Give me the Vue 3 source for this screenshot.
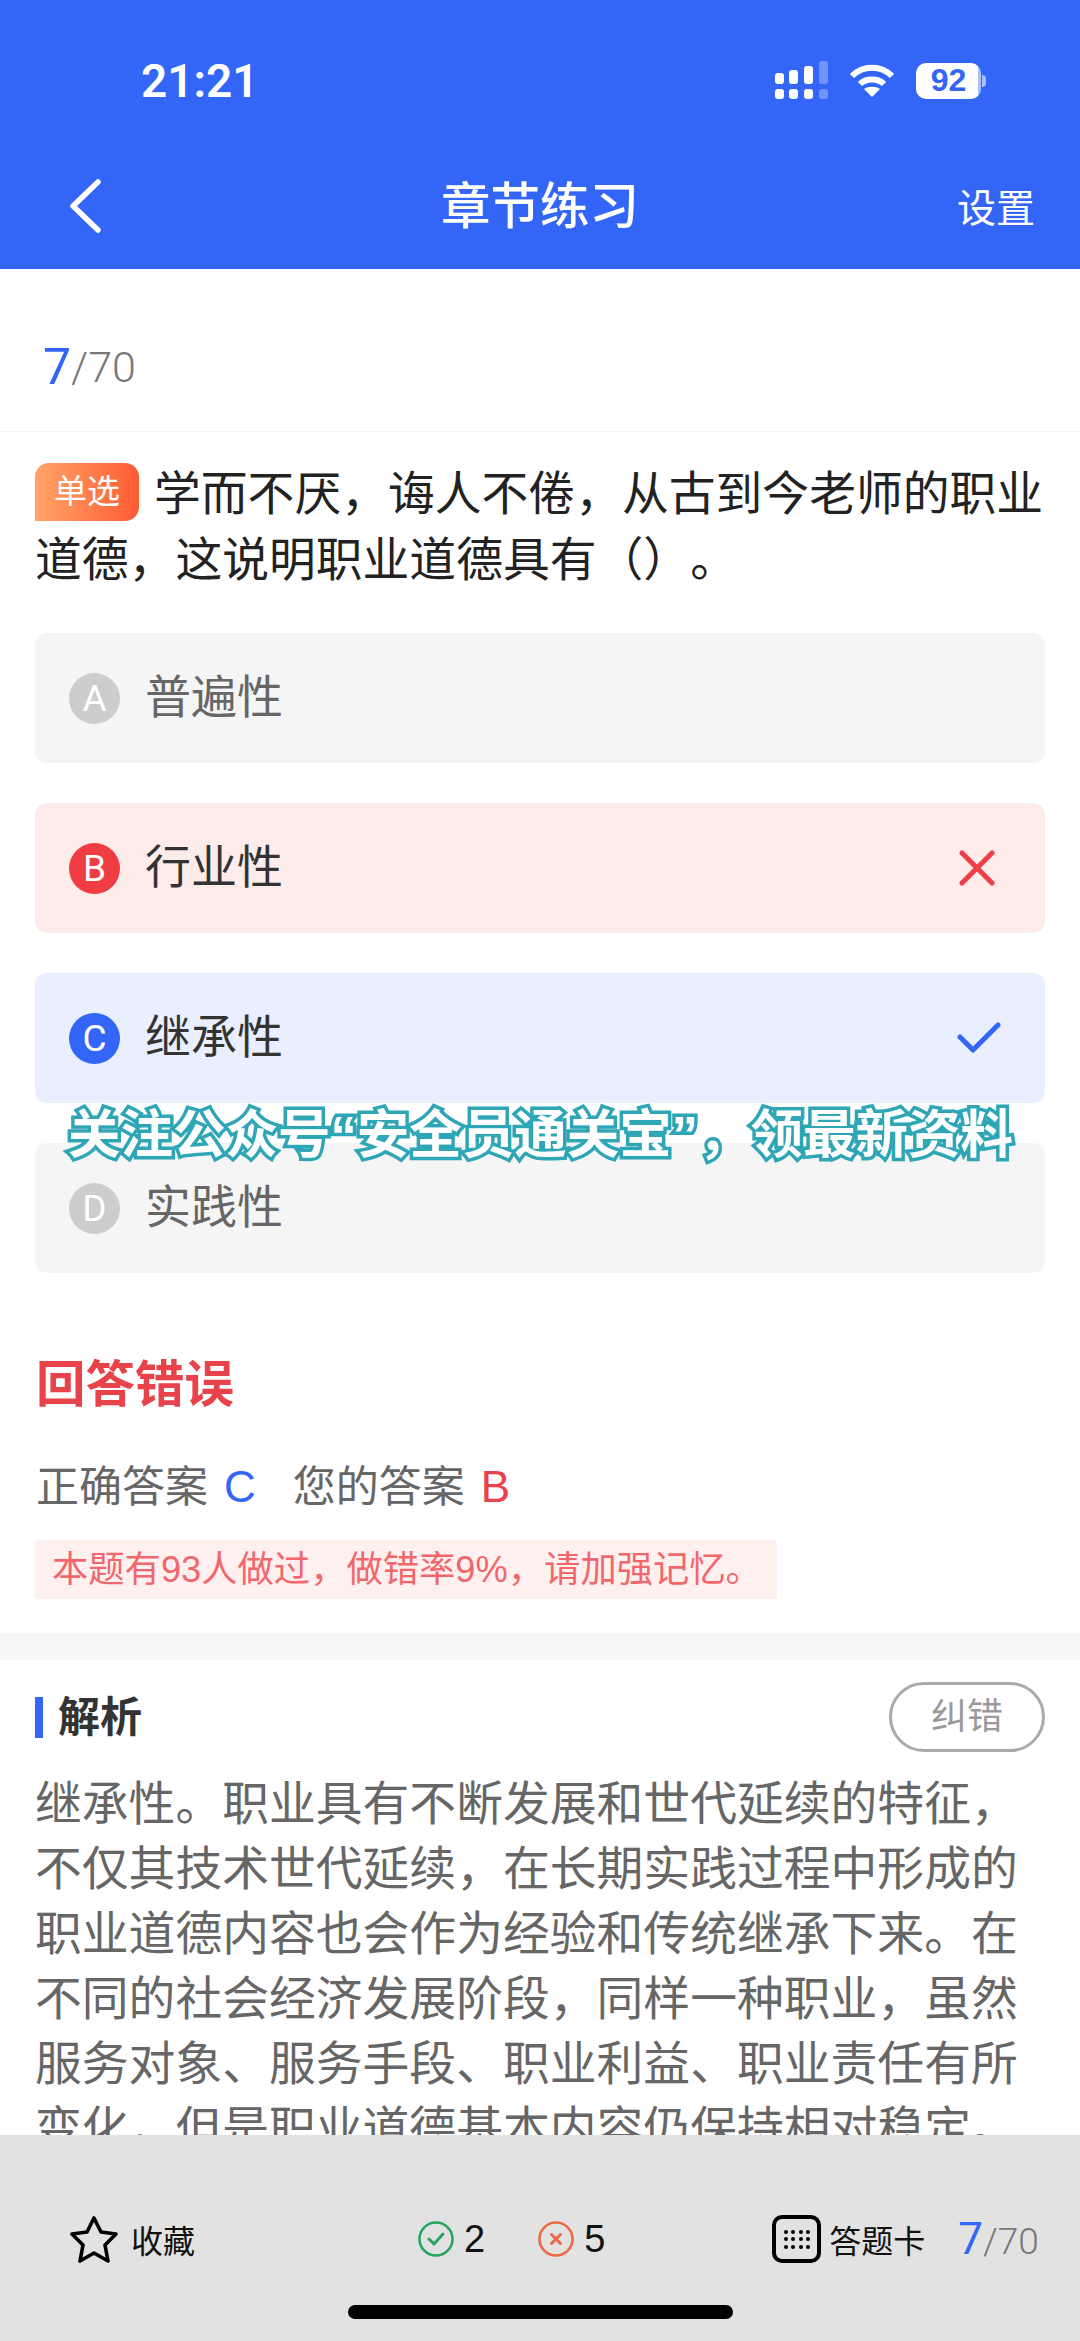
<script setup>
const options = [
  { key: 'A', text: '普遍性', state: 'idle' },
  { key: 'B', text: '行业性', state: 'wrong' },
  { key: 'C', text: '继承性', state: 'right' },
  { key: 'D', text: '实践性', state: 'idle' }
]
const rows = [0, 1, 2]
const cols = [0, 1, 2, 3]
</script>

<template>
  <div class="page">
    <header class="head">
      <div class="status">
        <span class="time">21:21</span>
        <div class="status-icons">
          <svg class="signal" width="54" height="40" viewBox="0 0 54 40" fill="#fff">
            <rect x="0" y="12" width="9" height="11" rx="3" />
            <rect x="14" y="9" width="9" height="14" rx="3" />
            <rect x="29" y="5" width="9" height="18" rx="3" />
            <rect x="44" y="0" width="9" height="23" rx="3" opacity=".3" />
            <rect x="0" y="28" width="9" height="10" rx="3" />
            <rect x="14" y="28" width="9" height="10" rx="3" />
            <rect x="29" y="28" width="9" height="10" rx="3" />
            <rect x="44" y="28" width="9" height="10" rx="3" opacity=".3" />
          </svg>
          <svg class="wifi" width="46" height="34" viewBox="0 0 46 34" fill="none" stroke="#fff" stroke-width="6">
            <path d="M3 12 C14 1 32 1 43 12" />
            <path d="M11 20 C17 14 29 14 35 20" />
            <path d="M23 33 L15 25 C19 22 27 22 31 25 Z" fill="#fff" stroke="none" />
          </svg>
          <div class="battery"><span>92</span></div>
          <span class="nub"></span>
        </div>
      </div>
      <nav class="nav">
        <svg class="back" width="32" height="54" viewBox="0 0 32 54" fill="none" stroke="#fff" stroke-width="5.5" stroke-linecap="round" stroke-linejoin="round">
          <path d="M29 3 L4 27 L29 51" />
        </svg>
        <h1 class="title">章节练习</h1>
        <span class="setting">设置</span>
      </nav>
    </header>

    <main class="content">
      <div class="counter"><em>7</em><span>/70</span></div>

      <section class="question">
        <div class="q-line"><span class="tag">单选</span><span>学而不厌，诲人不倦，从古到今老师的职业</span></div>
        <div class="q-line">道德，这说明职业道德具有（）。</div>
      </section>

      <section class="options">
        <div v-for="o in options" :key="o.key" class="option" :class="o.state">
          <span class="badge">{{ o.key }}</span>
          <span class="opt-text">{{ o.text }}</span>
          <svg v-if="o.state === 'wrong'" class="mark" width="36" height="36" viewBox="0 0 36 36" fill="none" stroke="#ee3f44" stroke-width="5" stroke-linecap="round">
            <path d="M3 3 L33 33 M33 3 L3 33" />
          </svg>
          <svg v-if="o.state === 'right'" class="mark check" width="44" height="32" viewBox="0 0 44 32" fill="none" stroke="#3366f6" stroke-width="5" stroke-linecap="round" stroke-linejoin="round">
            <path d="M3 15 L16 28 L41 3" />
          </svg>
        </div>
      </section>

      <section class="result">
        <h2 class="verdict">回答错误</h2>
        <p class="answers">
          <span>正确答案</span><b class="blue">C</b>
          <span class="second">您的答案</span><b class="red">B</b>
        </p>
        <p class="stat">本题有93人做过，做错率9%，请加强记忆。</p>
      </section>

      <div class="band"></div>

      <section class="analysis">
        <div class="an-head">
          <h3 class="an-title">解析</h3>
          <span class="report">纠错</span>
        </div>
        <p class="an-body">继承性。职业具有不断发展和世代延续的特征，不仅其技术世代延续，在长期实践过程中形成的职业道德内容也会作为经验和传统继承下来。在不同的社会经济发展阶段，同样一种职业，虽然服务对象、服务手段、职业利益、职业责任有所变化，但是职业道德基本内容仍保持相对稳定。</p>
      </section>
    </main>

    <footer class="foot">
      <div class="tools">
        <div class="tool fav">
          <svg width="48" height="48" viewBox="0 0 48 48" fill="none" stroke="#000" stroke-width="3.6" stroke-linejoin="round">
            <path d="M24 3 L31 17 L46 19 L35 30 L38 46 L24 38 L10 46 L13 30 L2 19 L17 17 Z" />
          </svg>
          <span>收藏</span>
        </div>
        <div class="tool score">
          <svg width="36" height="36" viewBox="0 0 36 36" fill="none" stroke="#2aa55f" stroke-width="2.6">
            <circle cx="18" cy="18" r="16.5" />
            <path d="M11 18 L16 23 L25 13" stroke-width="3" stroke-linecap="round" stroke-linejoin="round" />
          </svg>
          <span class="num">2</span>
          <svg class="second-icon" width="36" height="36" viewBox="0 0 36 36" fill="none" stroke="#ee6a47" stroke-width="2.6">
            <circle cx="18" cy="18" r="16.5" />
            <path d="M13.5 13.5 L22.5 22.5 M22.5 13.5 L13.5 22.5" stroke-width="3" stroke-linecap="round" />
          </svg>
          <span class="num">5</span>
        </div>
        <div class="tool card">
          <div class="grid-icon">
            <div v-for="r in rows" :key="r" class="grid-row"><i v-for="c in cols" :key="c"></i></div>
          </div>
          <span>答题卡</span>
          <div class="mini-count"><em>7</em><span>/70</span></div>
        </div>
      </div>
      <div class="home"></div>
    </footer>

    <div class="watermark">关注公众号“安全员通关宝”，领最新资料</div>
  </div>
</template>

<style>
html, body { margin: 0; padding: 0; background: #fff; }
</style>

<style scoped>
* { box-sizing: border-box; }
.page {
  position: relative;
  width: 1080px;
  height: 2341px;
  display: flex;
  flex-direction: column;
  overflow: hidden;
  background: #fff;
  font-family: "Liberation Sans", "Noto Sans CJK SC", sans-serif;
  text-spacing-trim: space-all;
}
h1, h2, h3, p { margin: 0; font-weight: normal; }
em { font-style: normal; }

.head { flex: none; height: 269px; background: #3366f6; color: #fff; }
.status {
  height: 161px;
  padding: 0 0 0 141px;
  display: flex;
  align-items: center;
  justify-content: space-between;
}
.time { font-family: Roboto, sans-serif; font-size: 46px; font-weight: 600; line-height: 54px; }
.status-icons { display: flex; align-items: center; padding-right: 94px; }
.wifi { margin-left: 20px; }
.battery {
  width: 65px;
  height: 36px;
  margin-left: 21px;
  border-radius: 10px;
  background: linear-gradient(90deg, #fff 96%, #a9bffb 96%);
  display: flex;
  align-items: center;
  justify-content: center;
  color: #3366f6;
  font-size: 32px;
  font-weight: 700;
}
.nub {
  width: 4px;
  height: 12px;
  margin-left: 1px;
  border-radius: 0 4px 4px 0;
  background: #a9bffb;
}
.nav {
  height: 108px;
  position: relative;
  display: flex;
  align-items: center;
  justify-content: space-between;
  padding: 0 45px 18px 69px;
}
.title {
  position: absolute;
  left: 441px;
  top: 11px;
  font-size: 49.5px;
  font-weight: 500;
  line-height: 70px;
}
.setting { font-size: 39px; line-height: 50px; padding-top: 6px; }

.content { flex: 1; min-height: 0; overflow: hidden; }
.counter {
  height: 163px;
  padding: 0 0 39px 43px;
  display: flex;
  align-items: flex-end;
  border-bottom: 1px solid #f3f3f3;
  color: #777;
  font-family: Roboto, sans-serif;
  line-height: 50px;
}
.counter em { font-size: 50px; color: #3366f6; }
.counter span { font-size: 43px; font-weight: 300; }

.question { padding: 29px 35px 0; }
.q-line { font-size: 46.8px; line-height: 66px; color: #222; white-space: nowrap; }
.tag {
  display: inline-block;
  width: 104px;
  height: 58px;
  margin-right: 15px;
  border-radius: 14px 14px 14px 0;
  background: linear-gradient(90deg, #ffa468, #ff5c33);
  color: #fff;
  font-size: 33px;
  line-height: 58px;
  text-align: center;
  vertical-align: top;
  margin-top: 2px;
}

.options { margin-top: 40px; padding: 0 35px; display: flex; flex-direction: column; gap: 40px; }
.option {
  height: 130px;
  padding: 0 50px 0 34px;
  display: flex;
  align-items: center;
  border-radius: 12px;
  background: #f5f5f5;
  color: #666;
  font-size: 46px;
}
.badge {
  width: 51px;
  height: 51px;
  margin-right: 25px;
  border-radius: 50%;
  background: #cdcdcd;
  color: #fff;
  font-family: Roboto, sans-serif;
  font-size: 37px;
  text-align: center;
  line-height: 51px;
}
.opt-text { flex: 1; line-height: 60px; padding-bottom: 2px; }
.check { margin-right: -6px; }
.wrong { background: #feeceb; color: #333; }
.wrong .badge { background: #ef3d41; }
.right { background: #e9effe; color: #333; }
.right .badge { background: #3366f6; }

.result { padding: 0 35px; }
.verdict { margin-top: 82px; font-size: 49.5px; line-height: 60px; font-weight: 700; color: #e8434a; padding-left: 1px; }
.answers { margin-top: 42px; font-size: 43px; line-height: 60px; color: #666; padding-left: 1px; }
.answers b { font-weight: normal; margin-left: 16px; font-size: 44px; }
.blue { color: #3366f6; }
.red { color: #e8434a; }
.second { margin-left: 37px; }
.stat {
  width: 742px;
  height: 59px;
  margin-top: 23px;
  padding-left: 17px;
  background: #fff0f0;
  border-radius: 3px;
  color: #f0686c;
  font-size: 36.3px;
  line-height: 59px;
  white-space: nowrap;
}
.band { height: 27px; margin-top: 34px; background: #f5f7f9; }

.analysis { padding: 22px 35px 0; }
.an-head { height: 70px; display: flex; align-items: center; justify-content: space-between; }
.an-title {
  border-left: 8px solid #3366f6;
  padding-left: 15px;
  height: 41px;
  font-size: 42px;
  line-height: 41px;
  font-weight: 700;
  color: #333;
}
.report {
  width: 156px;
  height: 70px;
  border: 3px solid #aaa;
  border-radius: 35px;
  color: #999;
  font-size: 36px;
  line-height: 64px;
  text-align: center;
}
.an-body { margin-top: 20px; font-size: 46.8px; line-height: 65px; color: #666; }

.foot { flex: none; height: 206px; background: #e2e2e2; }
.tools { padding: 80px 0 0 70px; height: 170px; display: flex; align-items: flex-start; }
.tool { display: flex; align-items: center; height: 48px; color: #111; font-size: 32px; }
.fav svg { margin-right: 13px; }
.score { margin-left: 223px; }
.num { margin-left: 10px; font-size: 38px; color: #111; }
.second-icon { margin-left: 53px; }
.card { margin-left: 167px; }
.grid-icon {
  width: 49px;
  height: 48px;
  margin-right: 8px;
  border: 4px solid #000;
  border-radius: 10px;
  display: flex;
  flex-direction: column;
  align-items: center;
  justify-content: center;
  gap: 3.5px;
}
.grid-row { display: flex; gap: 3.5px; }
.grid-row i { width: 4px; height: 4px; border-radius: 50%; background: #000; }
.mini-count {
  margin-left: 33px;
  display: flex;
  align-items: baseline;
  color: #777;
  font-family: Roboto, sans-serif;
}
.mini-count em { font-size: 44px; color: #3366f6; }
.mini-count span { font-size: 37px; font-weight: 300; }
.home { width: 385px; height: 14px; margin-left: 348px; border-radius: 7px; background: #000; }

.watermark {
  position: absolute;
  left: 68px;
  top: 1103px;
  font-size: 52.5px;
  line-height: 64px;
  font-weight: 700;
  white-space: nowrap;
  color: #fff;
  -webkit-text-stroke: 7px #2fa6b6;
  paint-order: stroke fill;
  text-shadow: -1px 3px 0 #2fa6b6;
}
</style>
